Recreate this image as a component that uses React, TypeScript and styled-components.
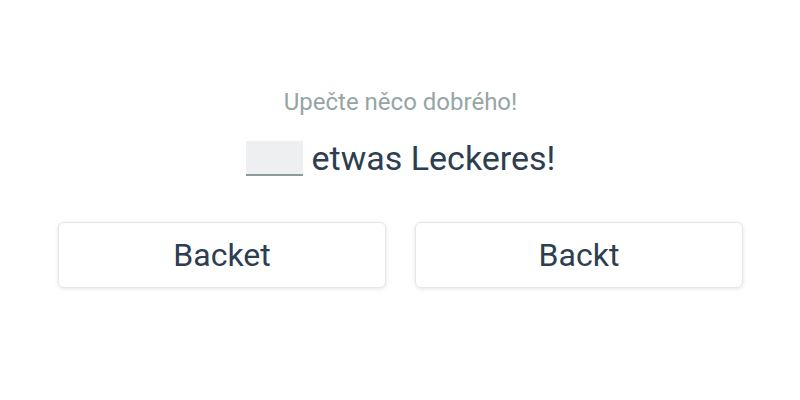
import React from "react";
import styled, { createGlobalStyle } from "styled-components";

const GlobalStyle = createGlobalStyle`
  html, body { margin: 0; padding: 0; background: #ffffff; }
  body { font-family: Roboto, "Noto Sans", sans-serif; }
`;

const Page = styled.div`
  width: 800px;
  height: 400px;
  box-sizing: border-box;
  padding: 86px 57px 0 58px;
  display: flex;
  flex-direction: column;
  align-items: center;
`;

const Hint = styled.div`
  font-size: 24px;
  line-height: 32px;
  color: #95a5a6;
`;

const Sentence = styled.div`
  margin-top: 20px;
  font-size: 34px;
  line-height: 40px;
  color: #2c3e50;
  display: flex;
  align-items: center;
  gap: 9px;
`;

const Blank = styled.span`
  display: inline-block;
  width: 57px;
  height: 35px;
  background: #eeeff1;
  border-bottom: 2px solid #8a9c9c;
  box-sizing: border-box;
`;

const Choices = styled.div`
  margin-top: 44px;
  width: 100%;
  display: grid;
  grid-template-columns: 1fr 1fr;
  gap: 29px;
`;

const Choice = styled.button`
  height: 66px;
  background: #ffffff;
  border: 1px solid #e4e6e8;
  border-radius: 6px;
  box-shadow: 0 1px 4px rgba(0, 0, 0, 0.1);
  font-family: Roboto, "Noto Sans", sans-serif;
  font-size: 32px;
  color: #2c3e50;
  cursor: pointer;
`;

export default function App() {
  return (
    <>
      <GlobalStyle />
      <Page>
        <Hint>Upečte něco dobrého!</Hint>
        <Sentence>
          <Blank />
          <span>etwas Leckeres!</span>
        </Sentence>
        <Choices>
          <Choice>Backet</Choice>
          <Choice>Backt</Choice>
        </Choices>
      </Page>
    </>
  );
}
